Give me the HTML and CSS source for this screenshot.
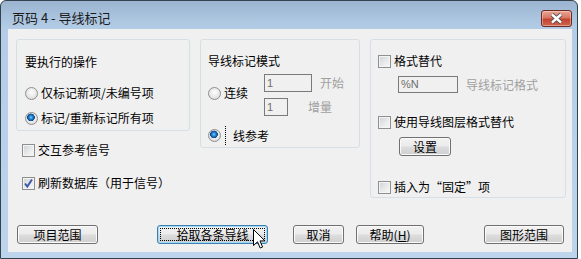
FILE: index.html
```html
<!DOCTYPE html>
<html lang="zh-CN">
<head>
    <meta charset="UTF-8">
    <title>页码 4 - 导线标记</title>
    <link rel="stylesheet" href="styles.css">
</head>
<body>
    <div class="window">
        <div class="titlebar">
            <span class="title">页码 4 - 导线标记</span>
            <span class="close-btn">
                <svg width="13" height="11" viewBox="0 0 13 11">
                    <path d="M2 1.5 L11 9.5 M11 1.5 L2 9.5" stroke="#4a4a4a" stroke-width="4.2" fill="none"/>
                    <path d="M2 1.5 L11 9.5 M11 1.5 L2 9.5" stroke="#ffffff" stroke-width="2.4" fill="none"/>
                </svg>
            </span>
        </div>
        <div class="client">
            <div class="top">
                <div class="col-left">
                    <div class="group group-action">
                        <div class="group-title">要执行的操作</div>
                        <div class="row radio-new"><span class="radio"></span>仅标记新项/未编号项</div>
                        <div class="row radio-all"><span class="radio checked"></span>标记/重新标记所有项</div>
                    </div>
                    <div class="row check-cross"><span class="check"></span>交互参考信号</div>
                    <div class="row check-refresh">
                        <span class="check">
                            <svg width="11" height="11" viewBox="0 0 11 11"><path d="M2 5.5 L4.3 8.5 L9 1.5" stroke="#3d5aa8" stroke-width="2" fill="none"/></svg>
                        </span>刷新数据库（用于信号）
                    </div>
                </div>

                <div class="group group-mode">
                    <div class="group-title">导线标记模式</div>
                    <div class="mode-seq">
                        <div class="row seq-label"><span class="radio"></span>连续</div>
                        <div class="seq-fields">
                            <div class="field-row"><span class="field w48">1</span><span class="dim lbl-start">开始</span></div>
                            <div class="field-row"><span class="field w24">1</span><span class="dim lbl-step">增量</span></div>
                        </div>
                    </div>
                    <div class="row line-ref"><span class="radio checked"></span><span class="focus-label">线参考</span></div>
                </div>

                <div class="group group-format">
                    <div class="row"><span class="check"></span>格式替代</div>
                    <div class="field-row fmt-field"><span class="field w60">%N</span><span class="dim lbl-fmt">导线标记格式</span></div>
                    <div class="row layer-check"><span class="check"></span>使用导线图层格式替代</div>
                    <button class="btn btn-setup">设置</button>
                    <div class="row fixed-check"><span class="check"></span>插入为“固定”项</div>
                </div>
            </div>

            <div class="buttons">
                <button class="btn b-project">项目范围</button>
                <button class="btn default b-pick">拾取各条导线</button>
                <button class="btn b-cancel">取消</button>
                <button class="btn b-help">帮助(<u>H</u>)</button>
                <button class="btn b-graph">图形范围</button>
            </div>
        </div>

        <svg class="cursor" width="13" height="21" viewBox="0 0 13 21">
            <path d="M0.5 0.5 L0.5 16.5 L4.5 12.8 L7.2 19 L9.6 18 L7 11.9 L12 11.9 Z" fill="#fff" stroke="#000" stroke-width="1" stroke-linejoin="round"/>
        </svg>
    </div>
</body>
</html>
```

FILE: styles.css
```css
body {
    margin: 0;
    background: #fff;
    font-family: "Noto Sans CJK SC", "Liberation Sans", sans-serif;
    font-size: 12px;
    color: #000;
}
.window {
    position: relative;
    width: 578px;
    height: 259px;
    box-sizing: border-box;
    border: 1px solid #34414f;
    border-radius: 6px 6px 0 0;
    background: linear-gradient(#9bb5d1 0, #b4cde7 28px, #bdd4ec 100%);
    display: flex;
    flex-direction: column;
}
.titlebar {
    height: 28px;
    box-sizing: border-box;
    padding: 6px 5px 0 11px;
    display: flex;
    justify-content: space-between;
    align-items: flex-start;
}
.title {
    font-size: 13px;
    line-height: 22px;
    color: #1b1b1b;
}
.close-btn {
    margin-top: 3px;
    width: 31px;
    height: 17px;
    box-sizing: border-box;
    border: 1px solid #6a2a22;
    border-radius: 3px;
    background: linear-gradient(#e9a797 0%, #d97763 45%, #c2432f 55%, #cf6650 100%);
    box-shadow: inset 0 0 0 1px rgba(255, 220, 210, 0.45);
    display: flex;
    justify-content: center;
    align-items: center;
}
.client {
    margin: 0 5px 6px 7px;
    height: 223px;
    box-sizing: border-box;
    background: #f0f0f0;
    padding: 10px 6px 0 8px;
    display: flex;
    flex-direction: column;
}
.top {
    display: flex;
    gap: 10px;
    align-items: flex-start;
}
.col-left {
    width: 174px;
}
.group {
    box-sizing: border-box;
    border: 1px solid #d5dfe5;
    border-radius: 3px;
}
.group-title {
    line-height: 16px;
}
.row {
    display: flex;
    align-items: center;
    height: 16px;
    line-height: 16px;
    white-space: nowrap;
}

/* radios and checkboxes */
.radio {
    flex: none;
    width: 13px;
    height: 13px;
    box-sizing: border-box;
    margin-right: 3px;
    border: 1px solid #8e8f8f;
    border-radius: 50%;
    background: radial-gradient(circle at 50% 40%, #fdfdfd 0, #e8e8e8 55%, #cfcfcf 100%);
}
.radio.checked {
    background:
        radial-gradient(circle at 45% 40%, #7fd0ff 0, #2a8bdc 1.6px, #155ea8 3px, #0d3f78 3.6px, transparent 4.1px),
        radial-gradient(circle at 50% 40%, #fdfdfd 0, #e8e8e8 55%, #cfcfcf 100%);
}
.check {
    flex: none;
    width: 13px;
    height: 13px;
    box-sizing: border-box;
    margin-right: 3px;
    border: 1px solid #8e8f8f;
    background: linear-gradient(135deg, #cfd1d4 0%, #e9eaeb 55%, #f8f8f8 100%);
    box-shadow: inset 0 0 0 1px #f4f4f4;
    display: flex;
    justify-content: center;
    align-items: center;
}

/* group 1 */
.group-action {
    height: 92px;
    padding: 14px 0 0 8px;
}
.radio-new {
    margin-top: 15px;
}
.radio-all {
    margin-top: 9px;
}
.check-cross {
    margin: 11px 0 0 6px;
}
.check-refresh {
    margin: 17px 0 0 6px;
}

/* group 2 */
.group-mode {
    width: 160px;
    height: 109px;
    padding: 13px 0 0 7px;
}
.mode-seq {
    display: flex;
    margin-top: 5px;
}
.seq-label {
    width: 56px;
    align-self: center;
    margin-bottom: 4px;
}
.seq-fields {
    display: flex;
    flex-direction: column;
    gap: 6px;
}
.field-row {
    display: flex;
    align-items: center;
}
.field {
    box-sizing: border-box;
    height: 18px;
    border: 1px solid #7a7a7a;
    background: #f0f0f0;
    padding-left: 2px;
    font-family: "Liberation Sans", sans-serif;
    font-size: 11px;
    line-height: 16px;
    color: #6d6d6d;
}
.w48 { width: 48px; }
.w24 { width: 24px; }
.w60 { width: 60px; height: 17px; line-height: 15px; }
.dim {
    color: #a0a0a0;
    line-height: 16px;
}
.lbl-start { margin-left: 8px; }
.lbl-step { margin-left: 20px; }
.line-ref {
    margin-top: 9px;
    height: 20px;
}
.line-ref .radio {
    margin-right: 4px;
}
.focus-label {
    border-left: 1px dotted #000;
    padding-left: 7px;
    line-height: 19px;
}

/* group 3 */
.group-format {
    width: 196px;
    height: 159px;
    padding: 13px 0 0 7px;
}
.fmt-field {
    margin: 7px 0 0 20px;
}
.lbl-fmt { margin-left: 8px; }
.layer-check { margin-top: 21px; }
.btn-setup {
    display: block;
    margin: 7px 0 0 21px;
    width: 52px;
    height: 18px;
}
.fixed-check { margin-top: 23px; }

/* push buttons */
.btn {
    box-sizing: border-box;
    height: 19px;
    padding: 0;
    border: 1px solid #707070;
    border-radius: 3px;
    background: linear-gradient(#f2f2f2 0%, #ebebeb 48%, #dddddd 52%, #cfcfcf 100%);
    box-shadow: inset 0 0 0 1px #fafafa;
    font-family: "Noto Sans CJK SC", "Liberation Sans", sans-serif;
    font-size: 12px;
    line-height: 15px;
    color: #000;
    text-align: center;
}
.btn.default {
    position: relative;
    border-color: #3c7fb1;
    box-shadow: inset 0 0 0 1px #9fd9f6;
}
.btn.default::after {
    content: "";
    position: absolute;
    top: 2px;
    left: 2px;
    right: 2px;
    bottom: 2px;
    border: 1px dotted #000;
}
.buttons {
    display: flex;
    margin-top: 27px;
    padding-left: 1px;
}
.b-project { width: 81px; }
.b-pick { width: 111px; margin-left: 59px; }
.b-cancel { width: 51px; margin-left: 25px; }
.b-help { width: 68px; margin-left: 12px; }
.b-graph { width: 80px; margin-left: 60px; }

.cursor {
    position: absolute;
    left: 252px;
    top: 228px;
}
```
